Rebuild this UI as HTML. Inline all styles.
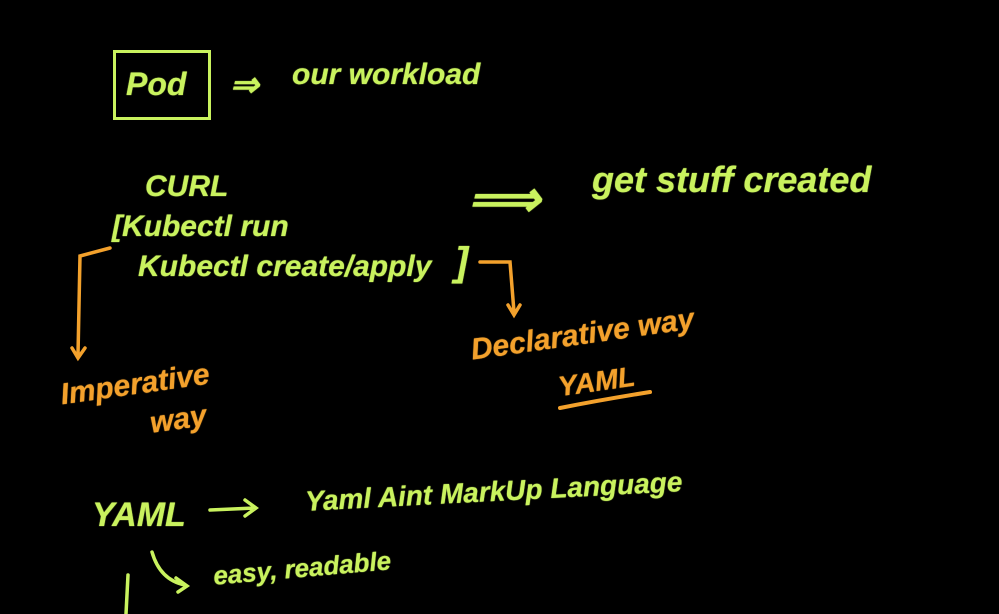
<!DOCTYPE html>
<html><head><meta charset="utf-8"><style>
html,body{margin:0;padding:0;background:#000;width:999px;height:614px;overflow:hidden;position:relative}
.t{position:absolute;font-family:"Liberation Sans",sans-serif;font-style:italic;font-weight:bold;white-space:nowrap;line-height:1}
.g{color:#c9f25e;text-shadow:0 0 1px #c9f25e}.o{color:#f3a12c;text-shadow:0 0 1px #f3a12c}
</style></head><body>
<div style="position:absolute;left:113px;top:50px;width:92px;height:64px;border:3px solid #c9f25e"></div>
<div class="t g" style="left:126px;top:68px;font-size:32px">Pod</div>
<div class="t g" style="left:230px;top:68px;font-size:34px">⇒</div>
<div class="t g" style="left:292px;top:60px;font-size:30px">our workload</div>
<div class="t g" style="left:145px;top:172px;font-size:30px">CURL</div>
<div class="t g" style="left:112px;top:212px;font-size:30px">[Kubectl run</div>
<div class="t g" style="left:138px;top:252px;font-size:30px">Kubectl create/apply</div>
<div class="t g" style="left:455px;top:242px;font-size:40px">]</div>
<div class="t g" style="left:468px;top:174px;font-size:50px">⟹</div>
<div class="t g" style="left:592px;top:162px;font-size:36px">get stuff created</div>
<svg style="position:absolute;left:0;top:0" width="999" height="614" fill="none" stroke-width="3.5" stroke-linecap="round">
<path d="M110 248 L80 256 L78 355 M72 348 L78 358 L85 348" stroke="#f3a12c"/>
<path d="M480 262 L510 262 L514 312 M508 305 L514 315 L520 305" stroke="#f3a12c"/>
<path d="M560 408 Q600 400 650 392" stroke="#f3a12c" stroke-width="4"/>
<path d="M210 510 L255 508 M245 500 L256 508 L245 516" stroke="#c9f25e"/>
<path d="M152 552 Q160 580 185 585 M176 578 L187 586 L178 592" stroke="#c9f25e"/>
<path d="M128 575 L126 614" stroke="#c9f25e"/>
</svg>
<div class="t o" style="left:60px;top:370px;font-size:30px;transform:rotate(-8deg)">Imperative</div>
<div class="t o" style="left:150px;top:405px;font-size:30px;transform:rotate(-8deg)">way</div>
<div class="t o" style="left:470px;top:320px;font-size:30px;transform:rotate(-8deg)">Declarative way</div>
<div class="t o" style="left:558px;top:368px;font-size:28px;transform:rotate(-8deg)">YAML</div>
<div class="t g" style="left:92px;top:498px;font-size:34px">YAML</div>
<div class="t g" style="left:305px;top:478px;font-size:28px;transform:rotate(-3deg)">Yaml Aint MarkUp Language</div>
<div class="t g" style="left:213px;top:555px;font-size:26px;transform:rotate(-5deg)">easy, readable</div>
</body></html>
